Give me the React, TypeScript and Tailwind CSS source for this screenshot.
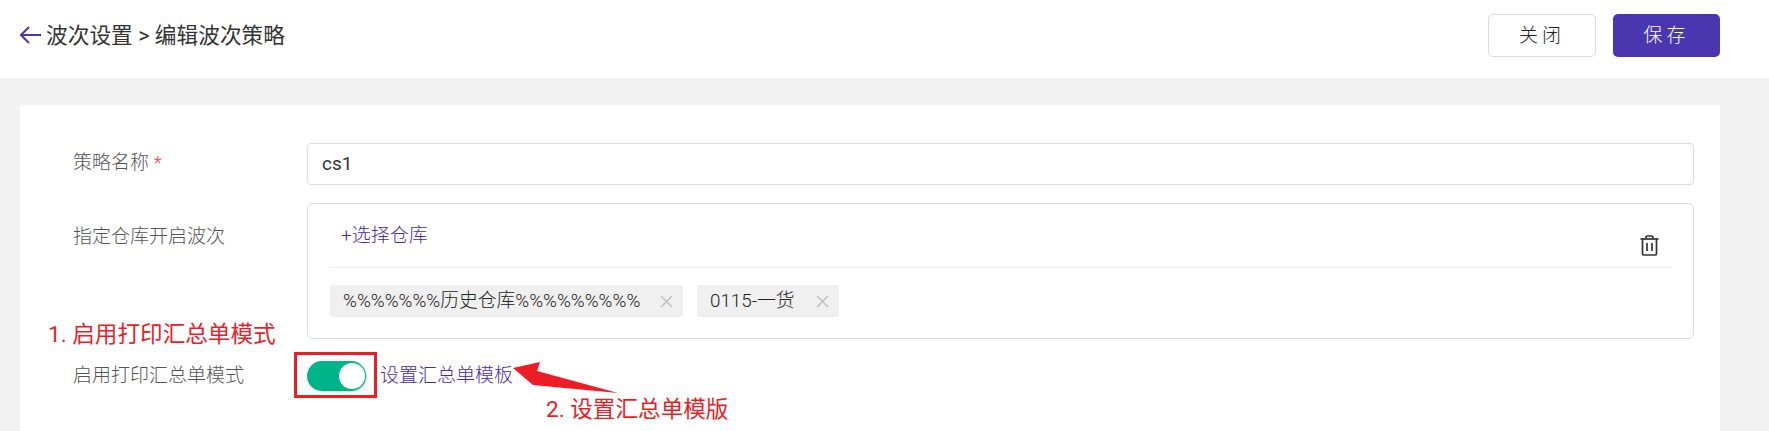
import React from 'react';

const TrashIcon = () => (
  <svg width="19" height="21" viewBox="0 0 19 21" fill="none" stroke="#333" strokeWidth="1.7">
    <path d="M6 3.5V2a1 1 0 0 1 1-1h5a1 1 0 0 1 1 1v1.5" />
    <path d="M0.5 4h18" />
    <path d="M2.5 4v14.5a1.5 1.5 0 0 0 1.5 1.5h11a1.5 1.5 0 0 0 1.5-1.5V4" />
    <path d="M7 8v8M12 8v8" />
  </svg>
);

const Tag: React.FC<{ label: string; className: string }> = ({ label, className }) => (
  <div className={`flex h-8 items-center justify-between rounded-[3px] bg-[#f0f0f0] pl-[13px] pr-[10px] ${className}`}>
    <span className="text-[18.8px] font-light text-[#222]">{label}</span>
    <svg width="13" height="13" viewBox="0 0 13 13" stroke="#bdbdbd" strokeWidth="1.4">
      <path d="M1 1l11 11M12 1L1 12" />
    </svg>
  </div>
);

export default function App() {
  return (
    <div className="relative h-[431px] w-[1769px] overflow-hidden bg-[#f3f3f3] font-['Roboto','Noto_Sans_CJK_SC',sans-serif]">
      {/* Header */}
      <div className="flex h-[78px] items-center justify-between bg-white pb-[7px] pl-5 pr-[49px]">
        <div className="flex items-center gap-[5px]">
          <svg width="21" height="18" viewBox="0 0 21 18" fill="none" stroke="#4a37b0" strokeWidth="2">
            <path d="M9 1L1 9l8 8M1 9h20" />
          </svg>
          <span className="pt-[1px] text-[21.7px] text-[#333]">波次设置 &gt; 编辑波次策略</span>
        </div>
        <div className="flex gap-[17px]">
          <button className="h-[43px] w-[108px] rounded-[5px] border border-[#dcdcdc] bg-white pt-[2px] text-[19px] font-light tracking-[4px] text-[#222]">
            关闭
          </button>
          <button className="h-[43px] w-[107px] rounded-[5px] bg-[#4a37b0] pt-[2px] text-[19px] font-light tracking-[4px] text-white">
            保存
          </button>
        </div>
      </div>

      {/* Form card */}
      <div className="ml-5 mr-[49px] mt-[27px] h-[400px] bg-white pl-[53px] pr-[26px] pt-[38px]">
        <div className="flex h-[42px]">
          <div className="w-[234px] pt-[6px] text-[19px] font-light text-[#555]">
            策略名称 <span className="text-[#f5424d]">*</span>
          </div>
          <div className="flex flex-1 items-center rounded-[4px] border border-[#dcdcdc] px-[14px] text-[19px] text-[#333]">
            cs1
          </div>
        </div>

        <div className="mt-[18px] flex">
          <div className="w-[234px] pt-[20px] text-[19px] font-light text-[#555]">指定仓库开启波次</div>
          <div className="h-[136px] flex-1 rounded-[6px] border border-[#dcdcdc] px-[22px]">
            <div className="flex h-[64px] justify-between border-b border-[#eeeeee]">
              <span className="pl-[11px] pt-[18px] text-[19px] font-light text-[#3f2bb5]">+选择仓库</span>
              <div className="pr-[12px] pt-[31px]">
                <TrashIcon />
              </div>
            </div>
            <div className="mt-[17px] flex gap-[14px]">
              <Tag label="%%%%%%%历史仓库%%%%%%%%%" className="w-[353px]" />
              <Tag label="0115-一货" className="w-[142px]" />
            </div>
          </div>
        </div>

        <div className="mt-[22px] flex items-center">
          <div className="w-[234px] text-[19px] font-light text-[#555]">启用打印汇总单模式</div>
          <div className="flex h-[30px] w-[59px] items-center justify-end rounded-full bg-[#00b48a] pr-[1px] shadow-[1px_1px_2px_rgba(0,0,0,0.2)]">
            <div className="h-[26px] w-[26px] rounded-full bg-white" />
          </div>
          <span className="ml-[14px] text-[19px] font-light text-[#3f2bb5]">设置汇总单模板</span>
        </div>
      </div>

      {/* Annotations drawn over the screenshot */}
      <div className="absolute left-[48px] top-[319px] text-[22.6px] leading-[32px] text-[#ee1c25]">1. 启用打印汇总单模式</div>
      <div className="absolute left-[294px] top-[352px] h-[46px] w-[83px] border-[3px] border-[#ee1c25]" />
      <svg className="absolute left-[510px] top-[358px]" width="112" height="40" viewBox="0 0 112 40">
        <path d="M3 10L30 4L27 13L108 35L23 27Z" fill="#ee1c25" />
      </svg>
      <div className="absolute left-[546px] top-[394px] text-[22.6px] leading-[32px] text-[#ee1c25]">2. 设置汇总单模版</div>
    </div>
  );
}
